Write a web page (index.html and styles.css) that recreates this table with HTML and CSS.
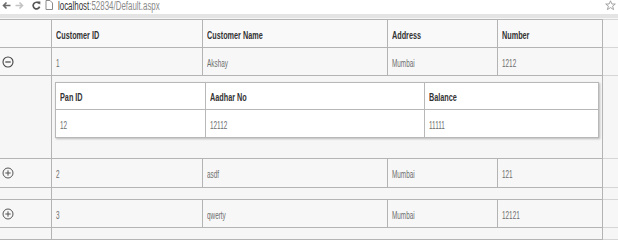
FILE: index.html
```html
<!DOCTYPE html>
<html>
<head>
<meta charset="utf-8">
<link rel="stylesheet" href="styles.css">
</head>
<body>
<div class="chrome">
  <svg class="ic back" width="9" height="9" viewBox="0 0 9 9"><path d="M8.5 4.5H1.5M4.5 1.5L1.5 4.5L4.5 7.5" fill="none" stroke="#6a6a6a" stroke-width="1.6"/></svg>
  <svg class="ic fwd" width="9" height="9" viewBox="0 0 9 9"><path d="M0.5 4.5H7.5M4.5 1.5L7.5 4.5L4.5 7.5" fill="none" stroke="#c4c4c4" stroke-width="1.6"/></svg>
  <svg class="ic reload" width="9" height="9" viewBox="0 0 9 9"><path d="M7 2.4A3.3 3.3 0 1 0 7.6 5.6" fill="none" stroke="#555" stroke-width="1.7"/><path d="M5.2 0.6L8.4 0.6L8.2 3.8Z" fill="#555"/></svg>
  <svg class="ic page" width="8" height="10" viewBox="0 0 8 10"><path d="M1 0.5H5L7.5 3V9.5H1Z" fill="#fff" stroke="#8a8a8a"/></svg>
  <span class="url t"><span class="host">localhost</span>:52834/Default.aspx</span>
  <svg class="star" width="11" height="11" viewBox="0 0 11 11"><path d="M5.5 0.8L6.9 4H10.3L7.6 6.1L8.6 9.6L5.5 7.6L2.4 9.6L3.4 6.1L0.7 4H4.1Z" fill="#fff" stroke="#9a9a9a" stroke-width="0.9"/></svg>
</div>
<table class="grid">
  <colgroup>
    <col class="c-exp"><col class="c-id"><col class="c-name"><col class="c-addr"><col class="c-num"><col class="c-extra">
  </colgroup>
  <tr class="head">
    <th></th>
    <th><span class="t h">Customer ID</span></th>
    <th><span class="t h">Customer Name</span></th>
    <th><span class="t h">Address</span></th>
    <th><span class="t h">Number</span></th>
    <th class="extra"></th>
  </tr>
  <tr class="row">
    <td class="exp"><svg width="12" height="12" viewBox="0 0 12 12"><circle cx="6" cy="6" r="5" fill="none" stroke="#444" stroke-width="1.1"/><path d="M3.3 6H8.7" stroke="#444" stroke-width="1.2"/></svg></td>
    <td><span class="t d">1</span></td>
    <td><span class="t d">Akshay</span></td>
    <td><span class="t d">Mumbai</span></td>
    <td><span class="t d">1212</span></td>
    <td class="extra"></td>
  </tr>
  <tr class="detail">
    <td></td>
    <td colspan="4" class="holder">
      <table class="inner">
        <colgroup><col class="i1"><col class="i2"><col class="i3"></colgroup>
        <tr class="ihead">
          <th><span class="t h">Pan ID</span></th>
          <th><span class="t h">Aadhar No</span></th>
          <th><span class="t h">Balance</span></th>
        </tr>
        <tr class="irow">
          <td><span class="t d">12</span></td>
          <td><span class="t d">12112</span></td>
          <td><span class="t d">11111</span></td>
        </tr>
      </table>
    </td>
    <td class="extra"></td>
  </tr>
  <tr class="row r2">
    <td class="exp"><svg width="12" height="12" viewBox="0 0 12 12"><circle cx="6" cy="6" r="5" fill="none" stroke="#555" stroke-width="1"/><path d="M3.3 6H8.7M6 3.3V8.7" stroke="#555" stroke-width="1"/></svg></td>
    <td><span class="t d">2</span></td>
    <td><span class="t d">asdf</span></td>
    <td><span class="t d">Mumbai</span></td>
    <td><span class="t d">121</span></td>
    <td class="extra"></td>
  </tr>
  <tr class="spacer">
    <td></td>
    <td colspan="4"></td>
    <td class="extra"></td>
  </tr>
  <tr class="row">
    <td class="exp"><svg width="12" height="12" viewBox="0 0 12 12"><circle cx="6" cy="6" r="5" fill="none" stroke="#555" stroke-width="1"/><path d="M3.3 6H8.7M6 3.3V8.7" stroke="#555" stroke-width="1"/></svg></td>
    <td><span class="t d">3</span></td>
    <td><span class="t d">qwerty</span></td>
    <td><span class="t d">Mumbai</span></td>
    <td><span class="t d">12121</span></td>
    <td class="extra"></td>
  </tr>
  <tr class="spacer">
    <td></td>
    <td colspan="4"></td>
    <td class="extra"></td>
  </tr>
</table>
</body>
</html>
```
FILE: styles.css
```css
html, body {
  margin: 0;
  padding: 0;
}
body {
  background: #f6f6f6;
  font-family: "Liberation Sans", Arial, sans-serif;
  overflow: hidden;
  width: 618px;
  height: 240px;
}
.chrome {
  height: 14px;
  background: #fff;
  border-bottom: 4px solid #e4e4e4;
  display: flex;
  align-items: flex-start;
  padding-left: 2px;
  position: relative;
}
.chrome .ic {
  display: block;
  margin-top: 1px;
}
.chrome .back { margin-right: 4px; }
.chrome .fwd { margin-right: 8px; }
.chrome .reload { margin-right: 4px; }
.chrome .page { margin-right: 5px; margin-top: 0; }
.url {
  font-size: 12px;
  line-height: 12px;
  color: #8a8a8a;
  transform: scaleX(0.66);
}
.url .host { color: #333; }
.star {
  position: absolute;
  right: 2px;
  top: 0;
}
.t {
  display: inline-block;
  white-space: nowrap;
  transform-origin: 0 50%;
}
.h {
  font-size: 11px;
  font-weight: bold;
  color: #333;
  transform: scaleX(0.66);
}
.d {
  font-size: 11px;
  color: #6e6e6e;
  transform: scaleX(0.58);
}
.grid {
  border-collapse: collapse;
  table-layout: fixed;
  width: 619px;
  margin-top: 1px;
  margin-left: -1px;
  border-right: none;
}
.c-exp { width: 52px; }
.c-id { width: 151px; }
.c-name { width: 185px; }
.c-addr { width: 110px; }
.c-num { width: 105px; }
.c-extra { width: 16px; }
.grid > tbody > tr > th,
.grid > tbody > tr > td {
  border: 1px solid #b4b4b4;
  padding: 0 4px;
  text-align: left;
  vertical-align: middle;
}
.grid > tbody > tr.head > th {
  height: 27px;
  background: #f9f9f9;
}
.grid > tbody > tr.row > td {
  height: 27px;
  background: #f7f7f7;
}
.grid > tbody > tr.r2 > td {
  height: 28px;
}
.grid > tbody > tr > td.exp {
  padding: 0 0 0 2px;
  line-height: 0;
}
.grid > tbody > tr > .extra {
  border-color: #d6d6d6;
  border-right: none;
  background: #f4f4f4;
  padding: 0;
}
.grid > tbody > tr.detail > td {
  background: #f6f6f6;
}
.grid > tbody > tr.detail > td.holder {
  padding: 6px 4px 20px 3px;
  vertical-align: top;
}
.grid > tbody > tr.spacer > td {
  height: 11px;
  padding: 0;
  background: #f6f6f6;
}
.inner {
  border-collapse: collapse;
  table-layout: fixed;
  width: 543px;
  background: #fff;
  box-shadow: 1px 1px 2px rgba(0, 0, 0, 0.25);
}
.i1 { width: 150px; }
.i2 { width: 219px; }
.i3 { width: 174px; }
.inner th,
.inner td {
  border: 1px solid #b8b8b8;
  padding: 0 4px;
  text-align: left;
  vertical-align: middle;
  background: #fff;
}
.inner .ihead th { height: 26px; }
.inner .irow td { height: 27px; }
```
